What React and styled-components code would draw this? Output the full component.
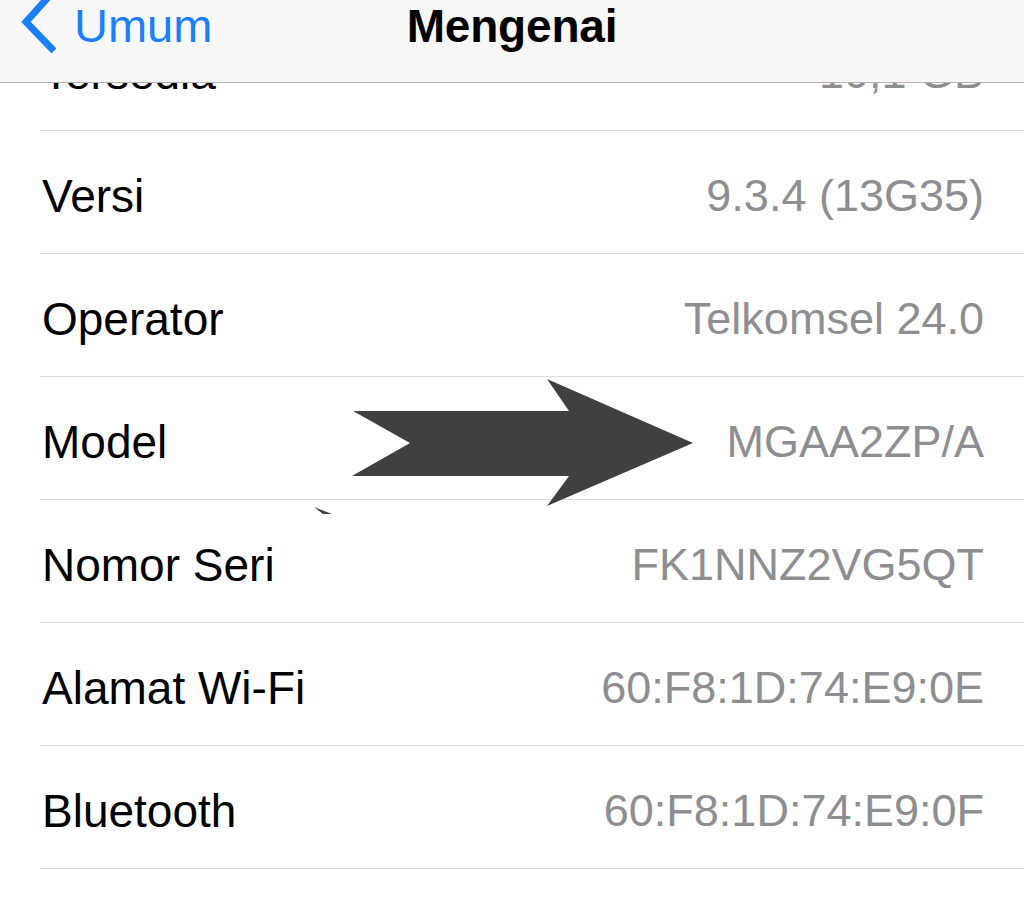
import React from 'react'
import styled, { createGlobalStyle } from 'styled-components'

const GlobalStyle = createGlobalStyle`
  html, body {
    margin: 0;
    padding: 0;
    background: #fff;
  }
  body {
    font-family: 'Liberation Sans', Arial, sans-serif;
    overflow: hidden;
  }
`

const Page = styled.div`
  position: relative;
  width: 1024px;
  height: 913px;
  overflow: hidden;
  background: #fff;
`

const NavBar = styled.div`
  position: absolute;
  top: 0;
  left: 0;
  right: 0;
  height: 82px;
  background: #f7f7f7;
  border-bottom: 1px solid #b2b2b2;
  z-index: 2;
`

const NavInner = styled.div`
  position: relative;
  display: flex;
  align-items: flex-start;
  justify-content: center;
  height: 100%;
`

const BackButton = styled.div`
  position: absolute;
  left: 18px;
  top: 0;
  display: flex;
  align-items: center;
  gap: 18px;
  color: #1a7ff8;
  font-size: 47px;
  height: 50px;
`

const Title = styled.div`
  font-size: 46px;
  font-weight: 700;
  color: #000;
  line-height: 52px;
  letter-spacing: -0.2px;
`

const List = styled.div`
  display: flex;
  flex-direction: column;
  padding-top: 8px;
`

const Row = styled.div`
  display: flex;
  align-items: center;
  justify-content: space-between;
  box-sizing: border-box;
  height: 123px;
  margin-left: 40px;
  padding: 8px 40px 0 2px;
  border-bottom: 1px solid #dcdcdc;
  font-size: 46px;
`

const Label = styled.span`
  color: #000;
`

const Value = styled.span`
  color: #8d8d92;
  font-size: 45px;
`

const ArrowLayer = styled.svg`
  position: absolute;
  top: 0;
  left: 0;
  width: 1024px;
  height: 913px;
  pointer-events: none;
  z-index: 1;
`

const rows = [
  ['Tersedia', '10,1 GB'],
  ['Versi', '9.3.4 (13G35)'],
  ['Operator', 'Telkomsel 24.0'],
  ['Model', 'MGAA2ZP/A'],
  ['Nomor Seri', 'FK1NNZ2VG5QT'],
  ['Alamat Wi-Fi', '60:F8:1D:74:E9:0E'],
  ['Bluetooth', '60:F8:1D:74:E9:0F'],
]

export default function App() {
  return (
    <Page>
      <GlobalStyle />
      <NavBar>
        <NavInner>
          <BackButton>
            <svg width="38" height="56" viewBox="0 0 38 56">
              <polyline
                points="34,-4 8,25 36,54"
                fill="none"
                stroke="#1a7ff8"
                strokeWidth="7"
              />
            </svg>
            <span>Umum</span>
          </BackButton>
          <Title>Mengenai</Title>
        </NavInner>
      </NavBar>
      <List>
        {rows.map(([label, value]) => (
          <Row key={label}>
            <Label>{label}</Label>
            <Value>{value}</Value>
          </Row>
        ))}
      </List>
      <ArrowLayer viewBox="0 0 1024 913">
        <polygon
          points="353,411 410,443 352,476 569,476 547,506 693,443 547,379 569,411"
          fill="#404040"
        />
        <polygon points="314,507 332,514 323,514" fill="#404040" />
      </ArrowLayer>
    </Page>
  )
}
